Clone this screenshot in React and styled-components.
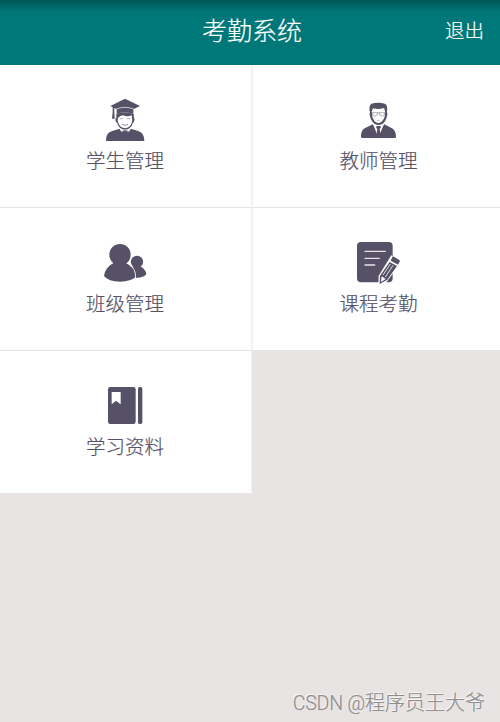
import React from 'react'
import styled, { createGlobalStyle } from 'styled-components'

const INK = '#565167';

//Styled-components

const GlobalStyle = createGlobalStyle`
    body {
        margin: 0;
        background: #e8e4e3;
        font-family: 'Noto Sans CJK SC', sans-serif;
    }
`;

const Page = styled.div`
    position: relative;
    width: 500px;
    height: 722px;
    overflow: hidden;
    background: #e8e4e3;
`;

const Header = styled.header`
    display: grid;
    grid-template-columns: 1fr auto 1fr;
    align-items: center;
    box-sizing: border-box;
    height: 65px;
    padding: 0 16px 7px 20px;
    color: white;
    background: linear-gradient(#005657 0, #007778 12px, #007778 100%);
`;

const Title = styled.h1`
    grid-column: 2;
    margin: 0;
    font-size: 25px;
    font-weight: 300;
    line-height: 36px;
    -webkit-text-stroke: 0.2px;
`;

const Logout = styled.button`
    justify-self: end;
    padding: 2px 0 0;
    border: none;
    background: none;
    color: white;
    font-family: inherit;
    font-size: 19.5px;
    font-weight: 300;
    line-height: 28px;
    -webkit-text-stroke: 0.2px;
`;

const Menu = styled.main`
    display: grid;
    grid-template-columns: 252px 252px;
    grid-auto-rows: 143px;
`;

const Cell = styled.div`
    display: flex;
    flex-direction: column;
    align-items: center;
    box-sizing: border-box;
    padding-top: 29px;
    background: white;
    border-right: 1px solid #f1f1f3;
    border-bottom: 1px solid ${props => props.$last ? '#e8e4e3' : '#e4e4e4'};

    &:nth-child(even) {
        border-right: none;
        border-left: 1px solid #f3f3f3;
    }
`;

const Icon = styled.svg`
    display: block;
    width: 51px;
    height: 51px;
    fill: ${INK};
`;

const Label = styled.span`
    margin-top: 1px;
    padding-right: 1px;
    color: ${INK};
    font-size: 19.5px;
    font-weight: 300;
    line-height: 28px;
    -webkit-text-stroke: 0.2px;

    ${Cell}:nth-child(even) & {
        padding-right: 0;
    }
`;

const Watermark = styled.div`
    position: absolute;
    right: 15px;
    bottom: 4px;
    color: #8f8d8d;
    font-size: 20px;
    font-weight: 300;
    line-height: 28px;
    white-space: nowrap;
    text-shadow: -1px -1px 0 #f8f6f6;
    -webkit-text-stroke: 0.2px;
`;

const Handle = styled.span`
    font-family: Roboto, sans-serif;
    font-size: 19.5px;
    letter-spacing: -0.2px;
`;

const StudentIcon = () => (
    <Icon viewBox="60 12 153 153">
        <path d="M91 48 L135 26 L180 48 L160 58 V72 Q135 61 110 72 V58 L103 54 V66 L104 86 H96 L98 66 V52 Z" />
        <path d="M109 57 Q134 47 161 57" fill="none" stroke="white" strokeWidth="2" />
        <path d="M109 72 Q135 62 161 72 L162 84 Q165 85 163 92 Q162 98 159 98 Q152 119 135 119 Q118 119 111 98 Q107 97 106 90 Q106 84 109 84 Z" />
        <path d="M114 84 Q120 77 129 76 Q143 82 155 76 L157 91 Q155 112 135 115 Q115 112 113 91 Z" fill="white" />
        <path d="M119 86 H129 M141 86 H151" fill="none" stroke={INK} strokeWidth="2" opacity=".7" />
        <path d="M127 103 Q135 109 144 103" fill="none" stroke={INK} strokeWidth="2" />
        <path d="M78 153 Q77 126 99 122 L119 116 L124 124 L135 118 L147 124 L152 116 L172 122 Q193 126 193 153 Z" />
        <path d="M119 115 L125 125 L135 119 L146 125 L152 115" fill="none" stroke="white" strokeWidth="2" />
    </Icon>
)

const TeacherIcon = () => (
    <Icon viewBox="54 12 153 153">
        <path d="M105 67 Q100 48 109 41 Q130 36 149 41 Q159 43 156 67 Q159 70 156 78 Q152 96 142 102 Q130 108 119 102 Q109 95 105 79 Q102 71 105 67 Z" />
        <path d="M110 65 L114 55 Q131 59 147 54 L151 66 L149 80 Q143 98 130 99 Q117 98 112 80 Z" fill="white" />
        <path d="M106 68 H155 M113 68 V76 Q121 81 127 75 V68 M134 68 V75 Q142 81 148 76 V68" fill="none" stroke={INK} strokeWidth="2" opacity=".65" />
        <path d="M126 91 H135" stroke={INK} strokeWidth="2" opacity=".6" />
        <path d="M78 141 Q77 119 92 113 L113 103 L130 119 L148 103 L168 113 Q183 119 183 141 Q183 144 179 144 H82 Q78 144 78 141 Z" />
        <path d="M114 102 L127 136 H133 L147 102 L130 109 Z" fill="white" />
        <path d="M125 108 H136 L138 112 L134 118 L137 136 L130 144 L124 136 L127 118 L123 112 Z" />
    </Icon>
)

const ClassIcon = () => (
    <Icon viewBox="60 21 153 153">
        <ellipse cx="171" cy="95" rx="18.5" ry="18" />
        <path d="M160 109 H181 Q197 118 199 132 Q194 143 168 144 L152 112 Z" />
        <path d="M102 98 Q75 111 72 138 Q85 155 120 155 Q154 154 166 141 Q166 111 136 98 Z" stroke="white" strokeWidth="5" paintOrder="stroke" />
        <circle cx="120" cy="74" r="32" />
    </Icon>
)

const CourseIcon = () => (
    <Icon viewBox="54 21 153 153">
        <rect x="66" y="36" width="107" height="121" rx="12" />
        <path d="M90 64 H151 M90 85 H133 M90 105 H119" stroke="white" strokeWidth="4" strokeLinecap="round" opacity=".85" />
        <path d="M169 76 L199 92 L190 109 L153 158 L130 166 L131 137 Z" fill="white" />
        <path d="M174 79 L193 90 Q196 92 194 95 L189 104 L167 92 L172 81 Z" />
        <path d="M164 96 L186 108 L157 149 L134 162 L135 137 Z" />
        <path d="M140 139 L152 147 L138 156 Z" fill="white" />
        <path d="M166 102 L144 135 M174 106 L151 141" stroke="white" strokeWidth="2.5" />
    </Icon>
)

const BookIcon = () => (
    <Icon viewBox="60 15 153 153">
        <rect x="84" y="36" width="83" height="111" rx="7" />
        <rect x="174" y="36" width="13" height="111" rx="5" />
        <path d="M95 51 H122 V88 L108 77 L95 88 Z" fill="white" />
    </Icon>
)

const items = [
    { label: '学生管理', Picture: StudentIcon },
    { label: '教师管理', Picture: TeacherIcon },
    { label: '班级管理', Picture: ClassIcon },
    { label: '课程考勤', Picture: CourseIcon },
    { label: '学习资料', Picture: BookIcon },
];

export default function App(){
    return (
        <Page>
            <GlobalStyle />
            <Header>
                <Title>考勤系统</Title>
                <Logout>退出</Logout>
            </Header>
            <Menu>
                {items.map(({ label, Picture }, i) => (
                    <Cell key={label} $last={i > 2}>
                        <Picture />
                        <Label>{label}</Label>
                    </Cell>
                ))}
            </Menu>
            <Watermark><Handle>CSDN @</Handle>程序员王大爷</Watermark>
        </Page>
    )
}
